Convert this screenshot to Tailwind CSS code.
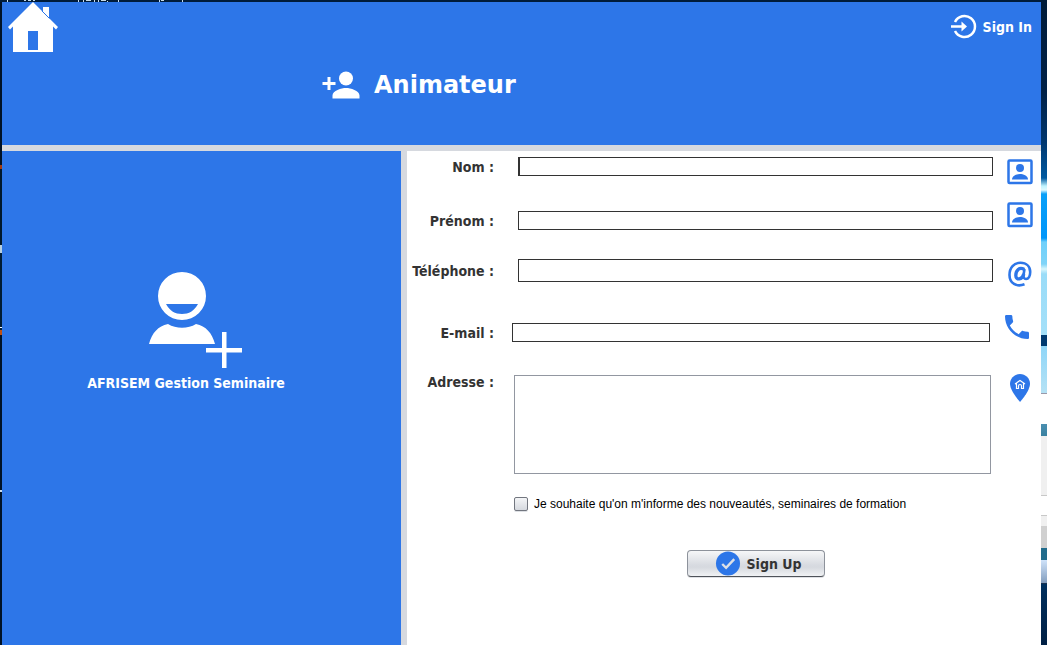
<!DOCTYPE html>
<html lang="fr">
<head>
<meta charset="utf-8">
<title>Animateur</title>
<script src="https://cdn.jsdelivr.net/npm/@tailwindcss/browser@4"></script>
</head>
<body class="relative flex h-screen flex-col overflow-hidden bg-[#001c3a] pt-[2px] font-['DejaVu_Sans_Condensed','DejaVu_Sans',sans-serif] text-[14px] leading-5 font-bold text-[#333]">
  <!-- desktop behind the window, top edge -->
  <svg class="absolute top-0 left-0" width="220" height="2" viewBox="0 0 220 2" shape-rendering="crispEdges" fill="#c8dcea"><path d="M7 0h1v2h-1zM24 0h2v1h-2zM28 0h3v1h-3zM33 0h2v1h-2zM78 0h1v2h-1zM83 0h1v2h-1zM86 0h5v1h-5zM94 0h1v2h-1zM98 0h1v2h-1zM101 0h5v1h-5zM107 1h1v1h-1zM118 0h1v2h-1zM159 0h1v2h-1zM161 0h3v1h-3zM182 0h1v2h-1z"/></svg>
  <div class="flex min-h-0 flex-1">
    <div class="w-[2px] shrink-0 bg-[linear-gradient(#001226_0_163px,#a33a10_163px_167px,#00182c_167px_243px,#b8d0e0_243px_251px,#001c34_251px_325px,#fff_325px_326px,#001c34_326px_328px,#c05010_328px_333px,#001226_333px_488px,#cde_488px_490px,#001226_490px)]"></div>
    <div class="flex min-w-0 flex-1 flex-col gap-[6px] bg-[#d6d9df]">
      <header class="flex h-[143px] shrink-0 items-start bg-[#2d76e8] text-white">
        <a href="#" aria-label="Accueil" class="ml-[6px] block w-[50px]">
          <svg width="50" height="50" viewBox="0 0 50 50" fill="#fff"><path d="M25 0 0 25l2 2.500L5 24.500V50h40V24.500l3 3 2-2.500L41 16V5h-6v5zM20 29h10v19H20z" fill-rule="evenodd"/><path d="M34 9 41.500 16.500" stroke="#2d76e8" stroke-width="1"/></svg>
        </a>
        <h1 class="mt-[65px] ml-[264px] flex flex-1 items-center gap-[14px] font-['DejaVu_Sans',sans-serif] text-[24px] leading-9">
          <svg width="38" height="28" viewBox="0 0 38 28" fill="#fff"><circle cx="24" cy="7.500" r="7"/><path d="M10.500 27.500v-3c0-5 9-7.500 13.500-7.500s13.500 2.500 13.500 7.500v3zM5.500 6h3v5h5v3h-5v5h-3v-5h-5v-3h5z"/></svg>
          Animateur
        </h1>
        <a href="#" class="mt-[12px] mr-[9px] flex items-center gap-[5px]">
          <svg width="27" height="26" viewBox="0 0 27 26" fill="none" stroke="#fff" stroke-width="2.500"><path d="M4 8a10.500 10.500 0 1 1 0 9M0 12.500h11"/><path d="M10.500 7.500 16 12.500l-5.500 5z" fill="#fff" stroke="none"/></svg>
          Sign In
        </a>
      </header>
      <div class="flex min-h-0 flex-1 gap-[6px]">
        <aside class="flex min-w-0 flex-[399] flex-col items-center bg-[#2d76e8] pt-[121px] text-white">
          <svg class="mr-[11px]" width="94" height="97" viewBox="0 0 94 97" fill="#fff"><path fill-rule="evenodd" d="M33 0a24 24 0 1 1 0 48 24 24 0 0 1 0-48zM17 32c4 7 9 10 16 10s12-3 16-10z"/><path d="M0 72C3 61 9 54 19 52c8 5 20 5 28 0 10 2 16 9 19 20zM73 60h4.500v16H93v4.500H77.500V96H73V80.500H57V76h16z"/></svg>
          <p class="mt-[4px] mr-[31px]">AFRISEM Gestion Seminaire</p>
        </aside>
        <main class="min-w-0 flex-[634] bg-white pt-[6px]">
          <form>
            <div class="flex h-[45px] items-start">
              <label for="nom" class="w-[87px] text-right">Nom :</label>
              <input id="nom" class="ml-[24px] h-[19px] min-w-0 flex-1 border border-l-2 border-[#333] px-1 font-normal">
              <svg class="mt-[2px] mr-[8px] ml-[14px]" width="26" height="26" viewBox="0 0 26 26" fill="#2d76e8"><rect x="1.500" y="1.500" width="23" height="22.500" rx="1" fill="none" stroke="#2d76e8" stroke-width="2.500"/><circle cx="13" cy="9" r="4"/><path d="M5 20.500c0-4 5-5.500 8-5.500s8 1.500 8 5.500z"/></svg>
            </div>
            <div class="flex h-[57px] items-start">
              <label for="prenom" class="mt-[9px] w-[87px] text-right">Prénom :</label>
              <input id="prenom" class="mt-[9px] ml-[24px] h-[19px] min-w-0 flex-1 border border-[#333] px-1 font-normal">
              <svg class="mr-[8px] ml-[14px]" width="26" height="26" viewBox="0 0 26 26" fill="#2d76e8"><rect x="1.500" y="1.500" width="23" height="22.500" rx="1" fill="none" stroke="#2d76e8" stroke-width="2.500"/><circle cx="13" cy="9" r="4"/><path d="M5 20.500c0-4 5-5.500 8-5.500s8 1.500 8 5.500z"/></svg>
            </div>
            <div class="flex h-[56px] items-start">
              <label for="tel" class="mt-[2px] w-[87px] text-right">Téléphone :</label>
              <input id="tel" type="tel" class="ml-[24px] h-[23px] min-w-0 flex-1 border border-[#333] px-1 font-normal">
              <svg class="mt-[2px] mr-[8px] ml-[14px]" width="26" height="26" viewBox="0 0 26 26" fill="none" stroke="#2d76e8" stroke-width="2.600"><path d="M17.500 23.300c-8 3-15-1-15-9.300C2.500 6.500 7 1.800 13.500 1.800c6 0 9.700 3.700 9.700 9.200 0 4-1.700 7-4.200 7-2 0-2.800-1.500-2.500-4l1-6"/><path stroke-width="3.300" d="M17.300 8.500c-5-3-8.500 1-8.500 6 0 5 6.500 4.500 8-1.500"/></svg>
            </div>
            <div class="flex h-[57px] items-start">
              <label for="email" class="mt-[8px] w-[87px] text-right">E-mail :</label>
              <input id="email" type="email" class="mt-[8px] ml-[18px] h-[19px] min-w-0 flex-1 border border-[#333] px-1 font-normal">
              <svg class="mr-[12px] ml-[15px]" width="24" height="24" viewBox="3 3 18 18" fill="#2d76e8"><path d="M6.620 10.790c1.440 2.830 3.760 5.140 6.590 6.590l2.200-2.200c.27-.27.67-.36 1.020-.24 1.120.37 2.330.57 3.570.57.550 0 1 .45 1 1V20c0 .55-.45 1-1 1-9.390 0-17-7.610-17-17 0-.55.45-1 1-1h3.500c.55 0 1 .45 1 1 0 1.250.2 2.450.57 3.570.110.350.030.740-.25 1.020z"/></svg>
            </div>
            <div class="flex items-start">
              <label for="adresse" class="w-[87px] text-right">Adresse :</label>
              <textarea id="adresse" class="mt-[3px] ml-[20px] h-[99px] min-w-0 flex-1 resize-none border border-[#9297a1] px-1 font-normal"></textarea>
              <svg class="mt-[2px] mr-[11px] ml-[19px]" width="20" height="28" viewBox="0 0 20 28"><path fill="#2d76e8" d="M10 0C4.500 0 0 4.300 0 9.800 0 17 10 28 10 28s10-11 10-18.200C20 4.300 15.500 0 10 0z"/><path d="M5 10 10 6.500l5 3.500M6.500 9.500v5h2V12c0-2 3-2 3 0v2.500h2v-5" fill="none" stroke="#fff" stroke-width="1.200"/></svg>
            </div>
            <div class="mt-[20px] ml-[107px] flex items-center gap-[6px]">
              <input id="infos" type="checkbox" class="size-[14px] appearance-none rounded-[2px] border border-[#72767f] bg-linear-to-b from-[#f4f5f7] to-[#d6d9df] shadow-[0_1px_0_#dde0e4] checked:bg-[#2d76e8]">
              <label for="infos" class="font-['Liberation_Sans',Arial,sans-serif] text-[12px] font-normal text-black">Je souhaite qu'on m'informe des nouveautés, seminaires de formation</label>
            </div>
            <div class="mt-[36px] flex justify-center pl-[64px]">
              <button type="button" class="flex h-[27px] w-[138px] items-center justify-center gap-[6px] rounded-[4px] border border-[#8d929b] border-b-[#4f5359] bg-[linear-gradient(#f6f7f8,#d8dbe1_55%,#d6d9df_65%,#f0f2f4)] shadow-[0_1px_0_#dfe1e5]">
                <svg class="ml-[4px]" width="26" height="25" viewBox="0 0 26 26"><circle cx="13" cy="13" r="12.500" fill="#2d76e8"/><path d="m7 13.500 4 4 8.500-9" fill="none" stroke="#dde0e6" stroke-width="2.500"/></svg>
                Sign Up
              </button>
            </div>
          </form>
        </main>
      </div>
    </div>
    <!-- desktop behind the window, right edge -->
    <div class="w-[6px] shrink-0 bg-[linear-gradient(#001c3a_0,#002147_90px,#00376e_140px,#0059a0_176px,#bff4ff_184px,#dffaff_188px,#0aa0f8_192px,#0096fa_236px,#6fd0fb_240px,#7fd4f8_262px,#d8f6fc_267px,#9adcf8_272px,#a4e0f9_333px,#003a70_333px_344px,#8fd6f8_344px,#b5e2f5_391px,#99a_391px_392px,#fff_392px_422px,#4a8fb0_422px,#3a81a0_434px,#f0f0f0_434px_493px,#c8c8c8_493px_494px,#fff_494px_513px,#c8c8c8_513px_514px,#f0f0f0_514px_524px,#d0d0d0_524px_546px,#216c8c_546px_558px,#cfe3fa_558px,#839dbd_581px,#1a3350_581px_582px,#00305e_582px,#002044_643px)]"></div>
  </div>
</body>
</html>
